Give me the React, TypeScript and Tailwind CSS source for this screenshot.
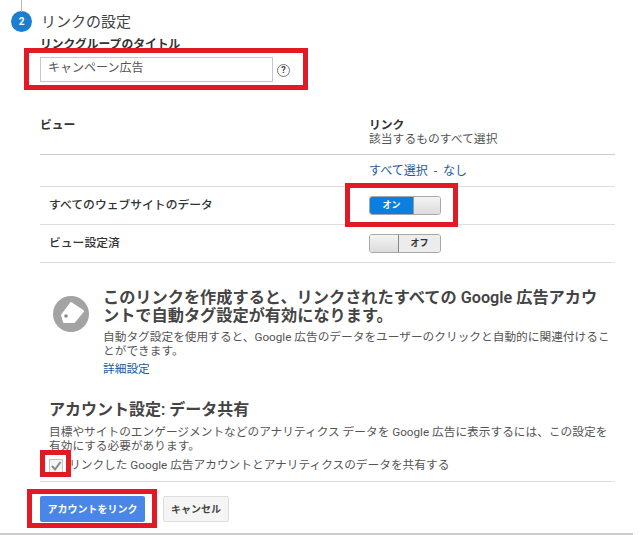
const font = "font-['Roboto','Noto_Sans_CJK_JP',sans-serif]";

const Toggle = ({ on }: { on: boolean }) => {
  if (on) {
    return (
      <div className="flex w-[72px] h-[19px] rounded-[3px] border border-[#a8a8a8] overflow-hidden">
        <div className="w-[43px] bg-[#0a7fe0] text-white text-[9px] font-bold flex items-center justify-center">オン</div>
        <div className="flex-1 bg-gradient-to-b from-[#f4f4f4] to-[#dcdcdc] border-l border-[#999]"></div>
      </div>
    );
  }
  return (
    <div className="flex w-[72px] h-[19px] rounded-[3px] border border-[#a8a8a8] overflow-hidden">
      <div className="w-[29px] bg-gradient-to-b from-[#f4f4f4] to-[#dcdcdc] border-r border-[#888]"></div>
      <div className="flex-1 bg-[#ececec] text-[#333] text-[9px] font-bold flex items-center justify-center">オフ</div>
    </div>
  );
};

const RedBox = ({ className }: { className: string }) => (
  <div className={"absolute border-[5px] border-[#e21a26] " + className}></div>
);

export default function App() {
  return (
    <div className={"relative w-[641px] h-[535px] bg-white overflow-hidden text-[#333] " + font}>
      <div className="absolute left-[21px] top-0 w-px h-[12px] bg-[#bbb]"></div>

      {/* ステップ見出し */}
      <div className="flex items-center pl-[11px] pt-[11px] h-[32px]">
        <div className="w-[21px] h-[21px] rounded-full bg-[#1c7ed0] text-white text-[10px] font-bold flex items-center justify-center">2</div>
        <h2 className="ml-[9px] text-[15px] leading-[20px] text-[#444]">リンクの設定</h2>
      </div>

      <div className="pl-[40px] pr-[26px]">
        <div className="h-[25px] pt-[4px] text-[11.8px] leading-[16px] font-semibold text-[#333]">リンクグループのタイトル</div>
        <div className="flex items-center">
          <div className="w-[233px] h-[25px] border border-[#c8c8c8] px-[7px] text-[12px] leading-[21px] text-[#555]">キャンペーン広告</div>
          <div className="ml-[4px] mt-[2px] w-[13px] h-[13px] rounded-full border border-[#777] text-[#444] text-[9px] font-bold leading-[11px] text-center">?</div>
        </div>

        {/* ビュー一覧 */}
        <div className="mt-[35px] flex h-[38px] border-b border-[#ccc] text-[11.8px] leading-[14px]">
          <div className="w-[329px] pt-[1px] font-semibold text-[#333]">ビュー</div>
          <div className="pt-[1px]">
            <div className="font-semibold text-[#333]">リンク</div>
            <div className="text-[#555]">該当するものすべて選択</div>
          </div>
        </div>
        <div className="flex h-[32px] border-b border-[#ddd] text-[12px] items-center">
          <div className="w-[329px]"></div>
          <div className="text-[#1a5a9c]">すべて選択 <span className="text-[#555] mx-[3px]">-</span> なし</div>
        </div>
        <div className="flex h-[38px] border-b border-[#ddd] items-center text-[11.8px] font-medium text-[#333]">
          <div className="w-[329px] pl-[9px]">すべてのウェブサイトのデータ</div>
          <Toggle on />
        </div>
        <div className="flex h-[38px] border-b border-[#ddd] items-center text-[11.8px] font-medium text-[#333]">
          <div className="w-[329px] pl-[9px]">ビュー設定済</div>
          <Toggle on={false} />
        </div>

        {/* 自動タグ設定 */}
        <div className="flex mt-[26px] pl-[13px]">
          <div className="mt-[7px] w-[36px] h-[36px] rounded-full bg-[#a3a3a3] shrink-0">
            <svg width="36" height="36" viewBox="0 0 36 36">
              <path d="M9 19 L18 7 L30 15 L21 26 L11 26 Z" fill="#fff" stroke="#fff" strokeWidth="2" strokeLinejoin="round" />
              <circle cx="13" cy="20" r="1.8" fill="#8a8a8a" />
            </svg>
          </div>
          <div className="ml-[14px] w-[508px]">
            <div className="text-[16.2px] leading-[18px] font-semibold text-[#444]">このリンクを作成すると、リンクされたすべての Google 広告アカウントで自動タグ設定が有効になります。</div>
            <div className="mt-[5px] text-[11.7px] leading-[14px] text-[#555]">自動タグ設定を使用すると、Google 広告のデータをユーザーのクリックと自動的に関連付けることができます。</div>
            <div className="mt-[3px] text-[11.7px] leading-[16px] text-[#1a5a9c]">詳細設定</div>
          </div>
        </div>

        {/* データ共有 */}
        <div className="mt-[23px] pl-[9px]">
          <div className="text-[16px] leading-[20px] font-semibold text-[#444]">アカウント設定: データ共有</div>
          <div className="mt-[5px] w-[565px] text-[11.7px] leading-[14px] text-[#555]">目標やサイトのエンゲージメントなどのアナリティクス データを Google 広告に表示するには、この設定を有効にする必要があります。</div>
          <div className="mt-[3px] flex items-center h-[20px] text-[11.7px] text-[#555]">
            <div className="w-[14px] h-[14px] border border-[#c4c4c4] bg-[#f4f4f4] flex items-center justify-center shrink-0">
              <svg width="12" height="12" viewBox="0 0 12 12">
                <path d="M2 6 L5 9.5 L10.5 2" fill="none" stroke="#888" strokeWidth="2" />
              </svg>
            </div>
            <span className="ml-[6px]">リンクした Google 広告アカウントとアナリティクスのデータを共有する</span>
          </div>
        </div>
        <div className="mt-[5px] border-b border-[#ddd]"></div>

        {/* ボタン */}
        <div className="mt-[14px] flex gap-[18px]">
          <div className="w-[105px] h-[26px] rounded-[2px] bg-[#4a86e8] text-white text-[10px] font-bold flex items-center justify-center">アカウントをリンク</div>
          <div className="w-[66px] h-[26px] rounded-[2px] bg-[#f5f5f5] border border-[#ddd] text-[#444] text-[10px] font-bold flex items-center justify-center">キャンセル</div>
        </div>
      </div>
      <div className="mt-[11px] border-b-2 border-[#ccc] w-[633px]"></div>

      {/* 赤枠の注釈 */}
      <RedBox className="left-[24px] top-[48px] w-[284px] h-[42px]" />
      <RedBox className="left-[345px] top-[183px] w-[113px] h-[44px]" />
      <RedBox className="left-[40px] top-[450px] w-[31px] h-[27px]" />
      <RedBox className="left-[27px] top-[489px] w-[130px] h-[39px]" />
    </div>
  );
}
